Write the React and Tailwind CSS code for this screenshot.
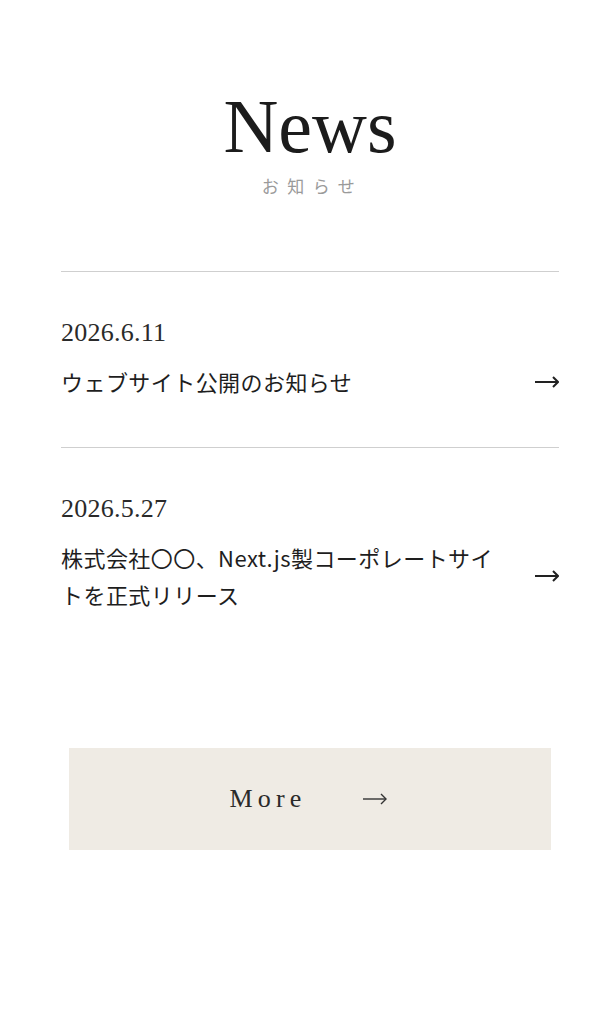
import React from "react";

const news = [
  { date: "2026.6.11", title: "ウェブサイト公開のお知らせ" },
  { date: "2026.5.27", title: "株式会社〇〇、Next.js製コーポレートサイトを正式リリース" },
];

function Arrow({ className = "", stroke = 2 }) {
  return (
    <svg viewBox="0 0 24 12" className={className} fill="none" stroke="currentColor" strokeWidth={stroke}>
      <path d="M0 6h23" />
      <path d="M18 1l5 5-5 5" />
    </svg>
  );
}

export default function App() {
  const serif = "font-['Liberation_Serif','Noto_Serif_CJK_JP',serif]";
  const sans = "font-['Noto_Sans_CJK_JP','Noto_Sans',sans-serif]";

  return (
    <div className="min-h-[1024px] w-full bg-white pl-[61px] pr-[54px] pt-[88px] text-[#222]">
      <div className="flex flex-col items-center">
        <h2 className={`${serif} text-[76px] leading-[76px] text-[#1c1c1c]`}>News</h2>
        <p className={`${sans} mt-[10px] pl-[5px] text-[17px] leading-[24px] tracking-[0.5em] text-[#9a9a9a]`}>
          お知らせ
        </p>
      </div>

      <ul className="mt-[73px] border-t border-[#cfcfcf]">
        {news.map((item, i) => (
          <li
            key={item.date}
            className={`pt-[43px] pb-[47px] ${i < news.length - 1 ? "border-b border-[#cfcfcf]" : ""}`}
          >
            <p className={`${serif} text-[26px] leading-[36px] tracking-[0.01em] text-[#2a2a2a]`}>{item.date}</p>
            <div className="mt-[12px] flex items-center justify-between gap-6">
              <p className={`${sans} w-[440px] text-[22px] leading-[37px] tracking-[0.02em] text-[#1e1e1e]`}>
                {item.title}
              </p>
              <Arrow className="h-[12px] w-[24px] shrink-0 text-[#222]" />
            </div>
          </li>
        ))}
      </ul>

      <div className="mx-[8px] mt-[88px] flex h-[102px] items-center justify-center gap-[56px] bg-[#efebe4] pr-[4px]">
        <span className={`${serif} text-[26px] leading-none tracking-[0.2em] text-[#2a2a2a]`}>More</span>
        <Arrow className="h-[12px] w-[24px] text-[#333]" stroke={1.4} />
      </div>
    </div>
  );
}
